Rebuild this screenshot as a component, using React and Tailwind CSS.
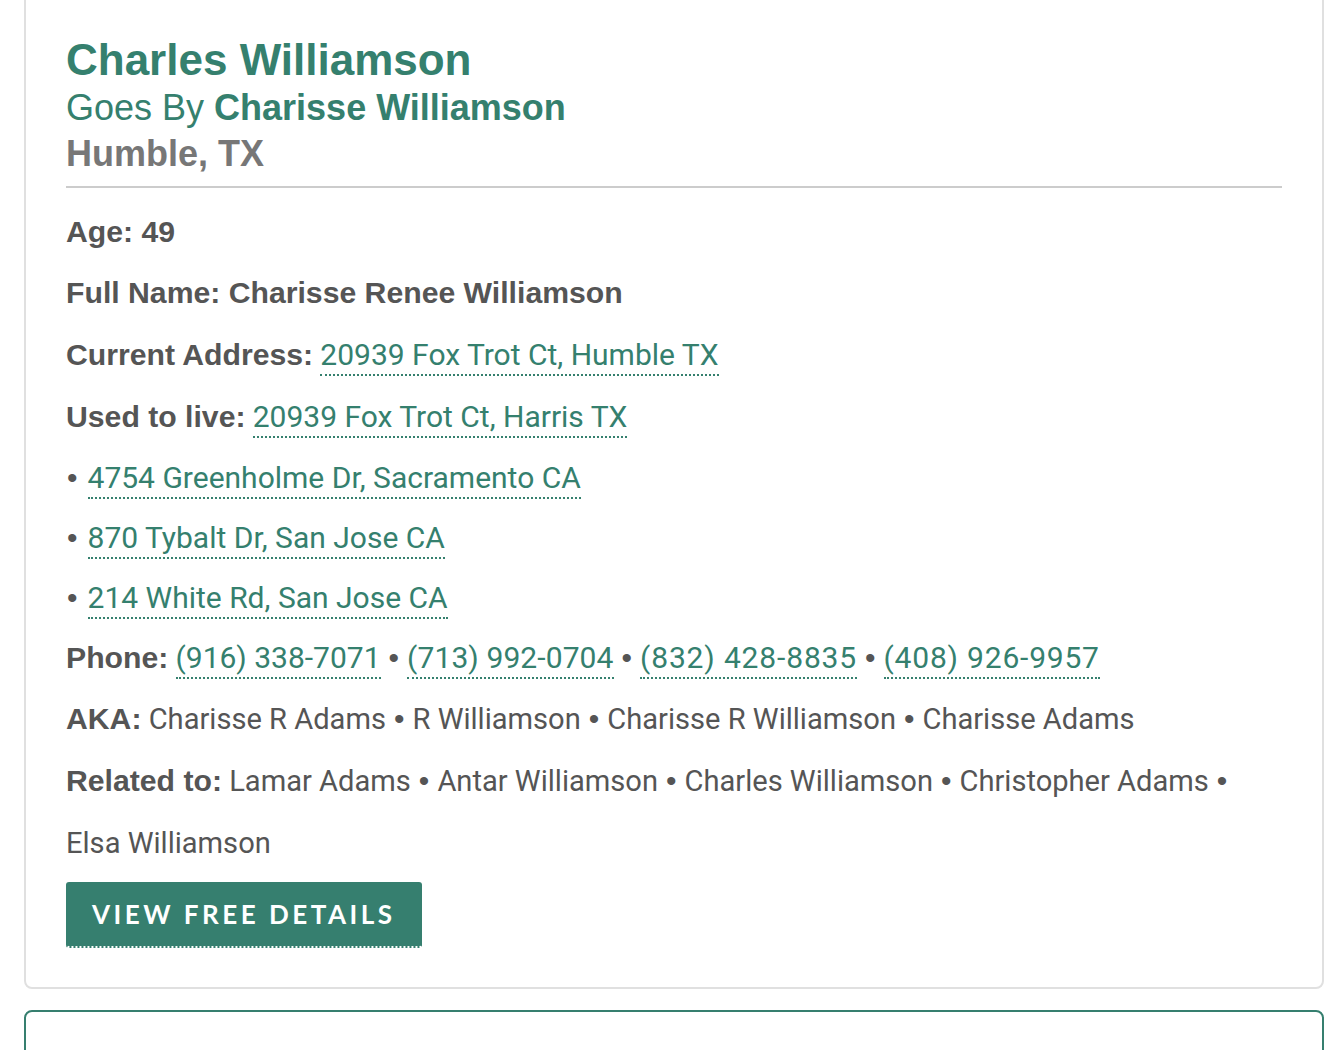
import React from "react";

const G = "text-[#35806e]";
const link = "text-[#35806e] text-[30px] border-b-2 border-dotted border-[#35806e] leading-none pb-[2px]";
const LS = { fontFamily: "'Liberation Sans', Arial, sans-serif" };
const B = ({ children }) => (
  <span className="font-bold text-[30.2px]" style={LS}>
    {children}
  </span>
);
const S = () => <span className="mx-[8px] text-[30px]" style={LS}>•</span>;
const Bullet = () => <span className="ml-[1px] mr-[10px] text-[30px]" style={LS}>•</span>;

export default function App() {
  const body = { fontFamily: "Roboto, 'Liberation Sans', sans-serif" };
  return (
    <div className="min-h-[1050px] bg-white overflow-hidden pl-[24px] pr-[12px]">
      <div className="-mt-[10px] border-2 border-[#e0e0e0] rounded-lg pl-[40px] pr-[40px] pb-[39px] pt-[44px]">
        <div style={LS}>
          <div className={`${G} font-bold text-[44px] leading-[48px]`}>Charles Williamson</div>
          <div className={`${G} text-[36px] leading-[46px] mt-[1px]`}>
            Goes By <span className="font-bold">Charisse Williamson</span>
          </div>
          <div className="text-[#777777] font-bold text-[36px] leading-[46px]">Humble, TX</div>
        </div>
        <div className="mt-[9px] h-[2px] bg-[#cccccc]" />
        <div className="mt-[13px] text-[#555555] text-[29.1px]" style={body}>
          <div className="h-[61px] leading-[61px]"><B>Age: 49</B></div>
          <div className="h-[62px] leading-[62px]"><B>Full Name: Charisse Renee Williamson</B></div>
          <div className="h-[62px] leading-[62px]">
            <B>Current Address:</B>{" "}
            <span className={link}>20939 Fox Trot Ct, Humble TX</span>
          </div>
          <div className="h-[62px] leading-[62px]">
            <B>Used to live:</B>{" "}
            <span className={link}>20939 Fox Trot Ct, Harris TX</span>
          </div>
          <div className="h-[60px] leading-[60px]">
            <Bullet /><span className={link}>4754 Greenholme Dr, Sacramento CA</span>
          </div>
          <div className="h-[60px] leading-[60px]">
            <Bullet /><span className={link}>870 Tybalt Dr, San Jose CA</span>
          </div>
          <div className="h-[60px] leading-[60px]">
            <Bullet /><span className={link}>214 White Rd, San Jose CA</span>
          </div>
          <div className="h-[60px] leading-[60px]">
            <B>Phone:</B>{" "}
            <span className={link}>(916) 338-7071</span>
            <S />
            <span className={`${link} tracking-[0.1px]`}>(713) 992-0704</span>
            <S />
            <span className={`${link} tracking-[0.85px]`}>(832) 428-8835</span>
            <S />
            <span className={`${link} tracking-[0.8px]`}>(408) 926-9957</span>
          </div>
          <div className="h-[62px] leading-[62px]">
            <B>AKA:</B> Charisse R Adams<S />R Williamson<S />Charisse R Williamson<S />Charisse Adams
          </div>
          <div className="leading-[62px]">
            <B>Related to:</B> Lamar Adams<S />Antar Williamson<S />Charles Williamson<S />Christopher Adams<S />
            {" "}<span className="whitespace-nowrap">Elsa Williamson</span>
          </div>
          <button
            className="mt-[8px] h-[66px] pl-[26px] pr-[26px] bg-[#367f6f] rounded-[3px] border-b-2 border-dotted border-white text-white font-bold text-[26px] tracking-[0.135em]"
            style={{ fontFamily: "Lato, 'Open Sans', sans-serif" }}
          >
            VIEW FREE DETAILS
          </button>
        </div>
      </div>
      <div className="mt-[21px] h-[60px] border-2 border-[#367f6f] rounded-lg" />
    </div>
  );
}
